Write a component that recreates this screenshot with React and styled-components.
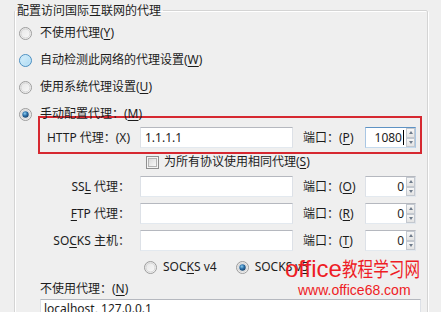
import React from 'react';
import styled, { createGlobalStyle } from 'styled-components';

const Global = createGlobalStyle`
  html, body {
    margin: 0;
    padding: 0;
    background: #efefef;
  }
  body {
    font-family: "Noto Sans", "Noto Sans CJK SC", sans-serif;
    font-size: 12px;
    color: #1c1c1c;
  }
`;

const Page = styled.div`
  position: relative;
  width: 441px;
  height: 312px;
  overflow: hidden;
  box-sizing: border-box;
  padding: 2px 13px 0 14px;
  background: #efefef;
`;

const Group = styled.fieldset`
  margin: 0;
  padding: 0 0 0 4px;
  min-width: 0;
  height: 340px;
  border: 1px solid #d4d4d4;
  border-radius: 2px;
  box-shadow: inset 1px 1px 0 #fff, 1px 1px 0 #fff;
`;

const Title = styled.legend`
  margin-left: -4px;
  padding: 0 2px;
  line-height: 16px;
  font-family: "Noto Sans CJK SC", sans-serif;
`;

const Options = styled.div`
  display: flex;
  flex-direction: column;
  gap: 11px;
  padding-top: 7px;
`;

const RadioRow = styled.label`
  display: flex;
  align-items: center;
  gap: ${p => p.$gap || 8}px;
  height: 16px;
  line-height: 16px;
  white-space: nowrap;
  margin-left: ${p => p.$offset || 0}px;
`;

const U = styled.span`
  text-decoration: underline;
  text-underline-offset: 2px;
`;

const Manual = styled.div`
  margin: -6px 0 0 21px;
  width: 382px;
`;

const HttpBox = styled.div`
  margin-left: -2px;
  border: 2px solid rgb(214, 40, 48);
  padding: 9px 5px 4px 0;
`;

const ProxyRow = styled.div`
  display: grid;
  grid-template-columns: 90px 153px 52px 51px;
  column-gap: 10px;
  align-items: center;
  height: 21px;
  white-space: nowrap;
`;

const Label = styled.span`
  text-align: right;
  line-height: 16px;
`;

const PortLabel = styled.span`
  line-height: 16px;
`;

const TextBox = styled.div`
  box-sizing: border-box;
  height: 21px;
  background: #fff;
  border: 1px solid;
  border-color: #b5b8bf #dde1e7 #e3e9ef #dde1e7;
  padding: 0 4px;
  line-height: 19px;
  font-family: "Noto Sans", sans-serif;
  font-size: 12px;
`;

const SpinBox = styled.div`
  box-sizing: border-box;
  display: flex;
  height: 21px;
  background: #fff;
  border: 1px solid;
  border-color: ${p => (p.$focus ? '#5e93c4 #a9c6e3 #c5daed #a9c6e3' : '#b5b8bf #dde1e7 #e3e9ef #dde1e7')};
`;

const SpinValue = styled.div`
  flex: 1;
  display: flex;
  justify-content: flex-end;
  align-items: center;
  padding-right: 1px;
  line-height: 19px;
  font-size: 12px;
`;

const Caret = styled.span`
  width: 1px;
  height: 15px;
  background: #000;
  margin-left: 1px;
`;

const Spinner = styled.div`
  display: flex;
  flex-direction: column;
  width: 9px;
  margin: 0 0 0 1px;
`;

const SpinButton = styled.div`
  flex: 1;
  box-sizing: border-box;
  border: 1px solid #c3c8cf;
  background: linear-gradient(#f7f7f7, #e3e3e3);
  display: flex;
  align-items: center;
  justify-content: center;
  &::after {
    content: "";
    border-left: 2px solid transparent;
    border-right: 2px solid transparent;
    ${p => (p.$down ? 'border-top: 3px solid #6e7b8b;' : 'border-bottom: 3px solid #6e7b8b;')}
  }
`;

const CheckRow = styled.label`
  display: flex;
  align-items: center;
  gap: 5px;
  height: 16px;
  padding-left: 106px;
  white-space: nowrap;
  line-height: 16px;
`;

const Rows = styled.div`
  display: flex;
  flex-direction: column;
  gap: 6px;
  margin-top: 6px;
`;

const SocksRow = styled.div`
  display: flex;
  align-items: center;
  margin-top: 8px;
  padding-left: 104px;
`;

const Caption = styled.div`
  margin-top: 6px;
  height: 16px;
  line-height: 16px;
`;

const Area = styled.div`
  box-sizing: border-box;
  margin-top: 2px;
  width: 381px;
  height: 40px;
  background: #fff;
  border: 1px solid;
  border-color: #b5b8bf #dde1e7 #e3e9ef #dde1e7;
  padding: 1px 3px;
  line-height: 16px;
`;

const Watermark = styled.div`
  position: absolute;
  left: 285px;
  top: 256px;
  color: #ee1c25;
  font-family: "Liberation Sans", "Noto Sans CJK SC", sans-serif;
  pointer-events: none;
`;

const MarkTitle = styled.div`
  display: flex;
  align-items: baseline;
  font-size: 24px;
  line-height: 26px;
  white-space: nowrap;
`;

const MarkCjk = styled.span`
  display: inline-block;
  font-family: "Noto Sans CJK SC", sans-serif;
  font-size: 20px;
  transform: scaleX(0.78);
  transform-origin: left center;
`;

const MarkUrl = styled.div`
  margin-left: 13px;
  font-size: 14px;
  line-height: 17px;
`;

const Radio = ({ checked, hot }) => {
  const id = `rr${checked ? 1 : 0}${hot ? 1 : 0}`;
  return (
    <svg width="13" height="13" viewBox="0 0 13 13">
      <defs>
        <linearGradient id={id} x1="0" y1="0" x2="1" y2="1">
          <stop offset="0" stopColor={hot ? '#def2fc' : '#e4e4e4'} />
          <stop offset="1" stopColor={hot ? '#a8d8f2' : '#fbfbfb'} />
        </linearGradient>
        <radialGradient id="dot" cx="0.4" cy="0.35" r="0.7">
          <stop offset="0" stopColor="#8fd0f2" />
          <stop offset="0.5" stopColor="#2b6fa8" />
          <stop offset="1" stopColor="#163f66" />
        </radialGradient>
      </defs>
      <circle cx="6.5" cy="6.5" r="6" fill={`url(#${id})`} stroke={hot ? '#4d8fc0' : '#9c9c9c'} strokeWidth="1" />
      <circle cx="6.5" cy="6.5" r="4.5" fill="none" stroke={hot ? '#c2e6f8' : '#d6d6d6'} strokeWidth="1" />
      {checked && <circle cx="6.5" cy="6.5" r="3.2" fill="url(#dot)" />}
    </svg>
  );
};

const Check = () => (
  <svg width="13" height="13" viewBox="0 0 13 13">
    <defs>
      <linearGradient id="cb" x1="0" y1="0" x2="1" y2="1">
        <stop offset="0" stopColor="#d8d8d8" />
        <stop offset="1" stopColor="#fafafa" />
      </linearGradient>
    </defs>
    <rect x="0.5" y="0.5" width="12" height="12" fill="#f4f4f4" stroke="#8f8f8f" />
    <rect x="2.5" y="2.5" width="8" height="8" fill="url(#cb)" stroke="#b4b4b4" />
  </svg>
);

const Spin = ({ value, focus }) => (
  <SpinBox $focus={focus}>
    <SpinValue>
      {value}
      {focus && <Caret />}
    </SpinValue>
    <Spinner>
      <SpinButton />
      <SpinButton $down />
    </Spinner>
  </SpinBox>
);

const Row = ({ label, value, portKey, portValue, focus }) => (
  <ProxyRow>
    <Label>{label}</Label>
    <TextBox>{value}</TextBox>
    <PortLabel>
      端口：(<U>{portKey}</U>)
    </PortLabel>
    <Spin value={portValue} focus={focus} />
  </ProxyRow>
);

export default function App() {
  return (
    <Page>
      <Global />
      <Group>
        <Title>配置访问国际互联网的代理</Title>
        <Options>
          <RadioRow>
            <Radio />
            <span>不使用代理(<U>Y</U>)</span>
          </RadioRow>
          <RadioRow>
            <Radio hot />
            <span>自动检测此网络的代理设置(<U>W</U>)</span>
          </RadioRow>
          <RadioRow>
            <Radio />
            <span>使用系统代理设置(<U>U</U>)</span>
          </RadioRow>
          <RadioRow>
            <Radio checked />
            <span>手动配置代理：(<U>M</U>)</span>
          </RadioRow>
        </Options>
        <Manual>
          <HttpBox>
            <Row label="HTTP 代理：(X)" value="1.1.1.1" portKey="P" portValue="1080" focus />
          </HttpBox>
          <CheckRow>
            <Check />
            <span>为所有协议使用相同代理(<U>S</U>)</span>
          </CheckRow>
          <Rows>
            <Row label={<>SS<U>L</U> 代理：</>} value="" portKey="O" portValue="0" />
            <Row label={<><U>F</U>TP 代理：</>} value="" portKey="R" portValue="0" />
            <Row label={<>SO<U>C</U>KS 主机：</>} value="" portKey="T" portValue="0" />
          </Rows>
          <SocksRow>
            <RadioRow $gap={6}>
              <Radio />
              <span>SOC<U>K</U>S v4</span>
            </RadioRow>
            <RadioRow $gap={6} $offset={19}>
              <Radio checked />
              <span>SOCKS v<U>5</U></span>
            </RadioRow>
          </SocksRow>
          <Caption>
            不使用代理：(<U>N</U>)
          </Caption>
          <Area>localhost, 127.0.0.1</Area>
        </Manual>
      </Group>
      <Watermark>
        <MarkTitle>
          office<MarkCjk>教程学习网</MarkCjk>
        </MarkTitle>
        <MarkUrl>www.office68.com</MarkUrl>
      </Watermark>
    </Page>
  );
}
